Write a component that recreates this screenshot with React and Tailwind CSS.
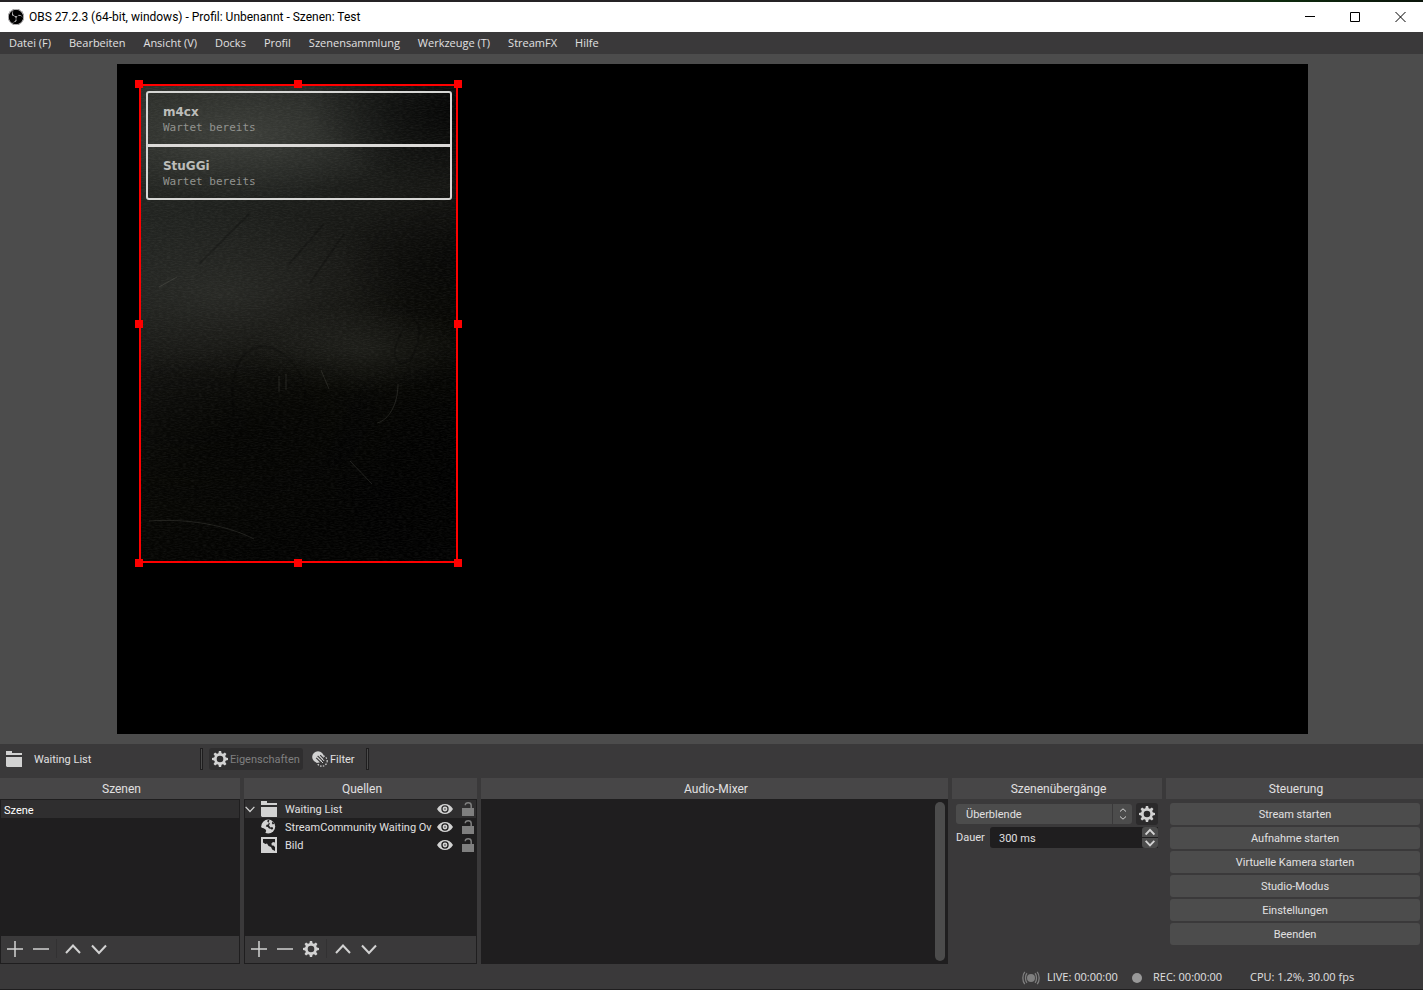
import React from "react";
import { SiObsstudio } from "react-icons/si";

const GEAR_TEETH = [0, 45, 90, 135, 180, 225, 270, 315];

function GearIcon({ className = "size-4" }) {
  return (
    <svg viewBox="0 0 16 16" className={className} fill="#d2d2d2" aria-hidden="true">
      {GEAR_TEETH.map((a) => (
        <path key={a} d="M6.3 3 L6.9 0 H9.1 L9.7 3 Z" transform={`rotate(${a} 8 8)`} />
      ))}
      <path fillRule="evenodd" d="M8 2a6 6 0 1 0 0 12a6 6 0 1 0 0-12ZM8 4.7a3.3 3.3 0 1 1 0 6.6a3.3 3.3 0 1 1 0-6.6Z" />
    </svg>
  );
}

function FolderIcon() {
  return (
    <svg viewBox="0 0 16 16" className="size-4 shrink-0" fill="#d2d2d2" aria-hidden="true">
      <path d="M0 0H6V2H16V4H0ZM0 6H16V16H1L0 15Z" />
    </svg>
  );
}

function GlobeIcon() {
  return (
    <svg viewBox="0 0 16 16" className="size-4 shrink-0" aria-hidden="true">
      <circle cx="7.200" cy="7.600" r="7" fill="#d2d2d2" />
      <path fill="#1f1e1f" d="M7 .4 8.400 1.600 7.600 3.200 8.800 4.600 8 6.600 9.400 8.400 11.400 8 12.200 9.600 11 10.800 9.600 9.800 8 9.400 6.800 8 4.800 7.400 5.600 5.800 7.200 5.400 7.800 3.800 6.200 2.600Z" />
      <path fill="#1f1e1f" d="M0 8.600 2.600 9.200 4.600 10.400 5.200 12 4.400 13.600 5.200 15H0ZM11.800 2.600 13.200 4.800 11.800 5.400 10.800 4Z" />
    </svg>
  );
}

function ImageIcon() {
  return (
    <svg viewBox="0 0 16 16" className="size-4 shrink-0" aria-hidden="true">
      <path fill="#d2d2d2" d="M0 0H16V16H0Z" />
      <path fill="#1f1e1f" d="M2 2H14V5.400L12 5 10.400 6.400 10.800 8.400 12.400 8.600 14 10V14L11.200 12.400 10 10 7.600 9 6 6.600 4.400 7 2 5.400Z" />
    </svg>
  );
}

function EyeIcon() {
  return (
    <svg viewBox="0 0 16 12" className="h-3 w-4" fill="#d2d2d2" aria-hidden="true">
      <path
        fillRule="evenodd"
        d="M0 6C2 2.600 4.800 1 8 1S14 2.600 16 6C14 9.400 11.200 11 8 11S2 9.400 0 6ZM8 2.300a3.700 3.700 0 1 0 0 7.400a3.700 3.700 0 1 0 0-7.400Z"
      />
      <path fillRule="evenodd" d="M8 3.600a2.400 2.400 0 1 0 0 4.800a2.400 2.400 0 1 0 0-4.800ZM8 5.200a.8.8 0 1 1 0 1.600a.8.8 0 1 1 0-1.600Z" />
    </svg>
  );
}

function LockIcon() {
  return (
    <svg viewBox="0 0 12 14" className="h-3.5 w-3" aria-hidden="true">
      <path fill="#7f7f7f" d="M0 6H12V14H0Z" />
      <path fill="none" stroke="#7f7f7f" strokeWidth="1.500" d="M9.200 6V3.500C9.200 1.600 8.200.8 6.200.8S3.300 1.600 3.300 3.200" />
    </svg>
  );
}

function FilterIcon() {
  return (
    <svg viewBox="0 0 16 16" className="size-4" aria-hidden="true">
      <circle cx="10" cy="10" r="5.200" fill="none" stroke="#d2d2d2" strokeWidth="1.200" strokeDasharray="1.500 1.300" />
      <circle cx="6" cy="6" r="5.800" fill="#d2d2d2" />
      <path stroke="#3a393a" strokeWidth="1.200" fill="none" d="M4.200 6.800 9.400 12M5.600 4.800 11.200 10.400M8.200 4.200 12 8" />
      <path stroke="#d2d2d2" strokeWidth="1" fill="none" d="M8.600 9.600 11 12M9.800 7.600 12.200 10" />
    </svg>
  );
}

function LineIcon({ d, width = 2, className = "size-4" }) {
  return (
    <svg viewBox="0 0 16 16" className={className} fill="none" stroke="#d2d2d2" strokeWidth={width} aria-hidden="true">
      <path d={d} />
    </svg>
  );
}

const PLUS = "M8 0V16M0 8H16";
const MINUS = "M0 8H16";
const UP = "M1 12 8 4.500 15 12";
const DOWN = "M1 4.500 8 12 15 4.500";

function Chalkboard() {
  return (
    <svg className="absolute inset-0 size-full" viewBox="0 0 319 479" preserveAspectRatio="none" aria-hidden="true">
      <defs>
        <linearGradient id="board" x1="0" y1="0" x2="0.350" y2="1">
          <stop offset="0" stopColor="#2b2d29" />
          <stop offset="0.300" stopColor="#1f211e" />
          <stop offset="0.550" stopColor="#131310" />
          <stop offset="0.750" stopColor="#080804" />
          <stop offset="1" stopColor="#020201" />
        </linearGradient>
        <radialGradient id="glow">
          <stop offset="0" stopColor="#565852" stopOpacity="0.600" />
          <stop offset="1" stopColor="#565852" stopOpacity="0" />
        </radialGradient>
        <radialGradient id="shade">
          <stop offset="0" stopColor="#000" stopOpacity="0.900" />
          <stop offset="1" stopColor="#000" stopOpacity="0" />
        </radialGradient>
        <filter id="grain" x="0" y="0" width="1" height="1">
          <feTurbulence type="fractalNoise" baseFrequency="0.250 0.900" numOctaves="2" seed="4" />
          <feColorMatrix values="0 0 0 0 0.700  0 0 0 0 0.720  0 0 0 0 0.660  0.500 0 0 0 -0.180" />
        </filter>
      </defs>
      <rect width="319" height="479" fill="url(#board)" />
      <ellipse cx="100" cy="52" rx="170" ry="65" fill="url(#glow)" opacity="0.850" />
      <ellipse cx="85" cy="210" rx="190" ry="85" fill="url(#glow)" opacity="0.450" />
      <ellipse cx="225" cy="265" rx="110" ry="45" fill="url(#glow)" opacity="0.400" />
      <ellipse cx="330" cy="25" rx="160" ry="85" fill="url(#shade)" />
      <ellipse cx="319" cy="180" rx="120" ry="80" fill="url(#shade)" opacity="0.600" />
      <ellipse cx="319" cy="400" rx="150" ry="140" fill="url(#shade)" />
      <ellipse cx="90" cy="350" rx="200" ry="85" fill="url(#shade)" opacity="0.550" />
      <rect width="319" height="479" filter="url(#grain)" opacity="0.250" />
      <g fill="none" stroke="#000" strokeOpacity="0.200" strokeWidth="2">
        <path d="M95 330C85 270 120 245 150 275S160 340 155 350M262 250C250 270 258 284 268 278S285 240 275 235M150 180 185 140M60 180 110 130M170 200 205 150" />
      </g>
      <g fill="none" stroke="#8a8c80" strokeOpacity="0.250" strokeWidth="0.800">
        <path d="M259 300C259 320 250 336 238 339M211 377 233 400M140 292V308M147 290V306M182 286 190 305M10 437C50 434 90 442 115 455M20 203 38 193" />
      </g>
    </svg>
  );
}

const HANDLES = [
  "left-0 top-0",
  "left-1/2 top-0",
  "left-full top-0",
  "left-0 top-1/2",
  "left-full top-1/2",
  "left-0 top-full",
  "left-1/2 top-full",
  "left-full top-full",
];

const WAITING = ["m4cx", "StuGGi"];

function Preview() {
  return (
    <main className="flex min-h-0 flex-1 justify-center bg-[#4c4c4c] py-2.5 pl-0.5">
      <div className="relative aspect-video h-full bg-black">
        <div className="absolute left-[22px] top-5 h-[479px] w-[319px]">
          <Chalkboard />
          <ul className="relative ml-[7px] mr-1.5 mt-[7px] flex flex-col divide-y-[3px] divide-[#dcdad8] overflow-hidden rounded-[3px] border-2 border-[#d6d6d4]">
            {WAITING.map((name) => (
              <li key={name} className="flex h-[54px] flex-col pl-[15px] pt-[11px] last:h-[51px]">
                <span className="font-['DejaVu_Sans',sans-serif] text-[12px] font-bold leading-4 text-[#bcbdba]">{name}</span>
                <span className="font-['DejaVu_Sans_Mono',monospace] text-[11px] leading-4 text-[#92938f]">Wartet bereits</span>
              </li>
            ))}
          </ul>
          <div className="absolute inset-0 border-2 border-[#ff0000]" />
          {HANDLES.map((pos) => (
            <span key={pos} className={`absolute size-2 -translate-1/2 bg-[#ff0000] ${pos}`} />
          ))}
        </div>
      </div>
    </main>
  );
}

function Dock({ title, children }) {
  return (
    <section className="flex min-w-0 flex-col">
      <h2 className="h-[21px] bg-[#474647] pl-[3px] text-center text-[12px] leading-[22px]">{title}</h2>
      {children}
    </section>
  );
}

function ToolButton({ label, children }) {
  return (
    <button type="button" aria-label={label} className="flex h-full w-[26px] items-center justify-center">
      {children}
    </button>
  );
}

function ListToolbar({ withGear }) {
  return (
    <div className="flex h-[27px] items-center bg-[#3a393a] pb-0.5 pl-px">
      <ToolButton label="Hinzufügen"><LineIcon d={PLUS} width={1.5} /></ToolButton>
      <ToolButton label="Entfernen"><LineIcon d={MINUS} width={1.5} /></ToolButton>
      {withGear && <ToolButton label="Eigenschaften"><GearIcon /></ToolButton>}
      <span className="mx-0.5 h-[19px] w-0.5 border-l border-[#323132]" />
      <ToolButton label="Nach oben"><LineIcon d={UP} /></ToolButton>
      <ToolButton label="Nach unten"><LineIcon d={DOWN} /></ToolButton>
    </div>
  );
}

const SOURCES = [
  { name: "Waiting List", Icon: FolderIcon, group: true },
  { name: "StreamCommunity Waiting Ov", Icon: GlobeIcon },
  { name: "Bild", Icon: ImageIcon },
];

const CONTROLS = [
  "Stream starten",
  "Aufnahme starten",
  "Virtuelle Kamera starten",
  "Studio-Modus",
  "Einstellungen",
  "Beenden",
];

const MENU = ["Datei (F)", "Bearbeiten", "Ansicht (V)", "Docks", "Profil", "Szenensammlung", "Werkzeuge (T)", "StreamFX", "Hilfe"];

function BarSeparator() {
  return <span className="h-[22px] w-[3px] border border-[#1f1e1f] bg-[#4c4c4c]" />;
}

export default function App() {
  return (
    <div className="flex h-screen min-h-[700px] flex-col overflow-hidden bg-[#3a393a] font-[Roboto,'Noto_Sans',sans-serif] text-[11px] text-[#e1e0e1]">
      <div className="h-0.5 shrink-0 bg-linear-to-r from-[#252325] from-80% via-[#0d2a0d] via-90% to-[#0a140a]" />
      <header className="flex h-[30px] shrink-0 items-center bg-white pl-2 text-black">
        <span className="rounded-full bg-black">
          <SiObsstudio className="size-4 text-[#dcdadc]" aria-hidden="true" />
        </span>
        <h1 className="ml-[5px] flex-1 text-[12px]">OBS 27.2.3 (64-bit, windows) - Profil: Unbenannt - Szenen: Test</h1>
        <button type="button" aria-label="Minimieren" className="flex h-full w-[45px] items-center justify-center">
          <svg viewBox="0 0 11 10" className="h-2.5 w-[11px]" stroke="#000" aria-hidden="true"><path d="M0 4.500H10" /></svg>
        </button>
        <button type="button" aria-label="Maximieren" className="flex h-full w-[45px] items-center justify-center">
          <svg viewBox="0 0 11 10" className="h-2.5 w-[11px]" stroke="#000" fill="none" aria-hidden="true"><path d="M.5.5H9.500V9.500H.5Z" /></svg>
        </button>
        <button type="button" aria-label="Schließen" className="flex h-full w-[45px] items-center justify-center">
          <svg viewBox="0 0 11 10" className="h-2.5 w-[11px]" stroke="#000" aria-hidden="true"><path d="M.5 0 10.500 10M10.500 0 .5 10" /></svg>
        </button>
      </header>
      <nav className="flex h-[22px] shrink-0 items-center gap-0.5 pl-px font-['Open_Sans','Noto_Sans',sans-serif]">
        {MENU.map((m) => (
          <button key={m} type="button" className="px-2">{m}</button>
        ))}
      </nav>

      <Preview />

      <div className="flex h-[34px] shrink-0 items-start pl-1.5 pt-1">
        <div className="flex h-[22px] w-[194px] items-center gap-3">
          <FolderIcon />
          <span className="pt-0.5">Waiting List</span>
        </div>
        <BarSeparator />
        <button type="button" disabled className="ml-1.5 flex h-[22px] w-[94px] items-center gap-0.5 rounded-[3px] bg-[#2f2e2f] pl-[3px] text-[#7f7f7f]">
          <GearIcon className="size-4 shrink-0" />
          <span className="pt-0.5">Eigenschaften</span>
        </button>
        <button type="button" className="ml-[9px] mr-[11px] flex h-[22px] w-[43px] items-center gap-0.5">
          <FilterIcon />
          <span className="pt-0.5">Filter</span>
        </button>
        <BarSeparator />
      </div>

      <div className="grid h-[186px] shrink-0 grid-cols-[240fr_233fr_467fr_210fr_257fr] gap-1">
        <Dock title="Szenen">
          <div className="flex flex-1 flex-col border border-[#1f1e1f] bg-[#1f1e1f]">
            <ul className="flex-1">
              <li className="h-[18px] bg-[#2f2e2f] pl-[3px] leading-[21px] text-white">Szene</li>
            </ul>
            <ListToolbar />
          </div>
        </Dock>

        <Dock title="Quellen">
          <div className="flex flex-1 flex-col border border-[#1f1e1f] bg-[#1f1e1f]">
            <ul className="flex-1">
              {SOURCES.map(({ name, Icon, group }) => (
                <li key={name} className={`flex h-[18px] items-center pr-0.5 ${group ? "bg-[#2f2e2f]" : ""}`}>
                  <span className="flex w-4 shrink-0">{group && <LineIcon d={DOWN} className="size-2.5" />}</span>
                  <Icon />
                  <span className="ml-2 min-w-0 flex-1 whitespace-nowrap pt-0.5">{name}</span>
                  <button type="button" aria-label={`${name} ein-/ausblenden`} className="ml-1.5"><EyeIcon /></button>
                  <button type="button" aria-label={`${name} sperren`} className="ml-[9px]"><LockIcon /></button>
                </li>
              ))}
            </ul>
            <ListToolbar withGear />
          </div>
        </Dock>

        <Dock title="Audio-Mixer">
          <div className="flex flex-1 justify-end bg-[#1f1e1f] p-[3px]">
            <div className="w-2.5 rounded-full bg-[#4c4c4c]" />
          </div>
        </Dock>

        <Dock title="Szenenübergänge">
          <div className="flex flex-col gap-0.5 p-1">
            <div className="flex items-center gap-1">
              <div className="grid h-5 flex-1 grid-cols-[1fr_20px] rounded-[3px] bg-[#4c4c4c]">
                <select aria-label="Szenenübergang" className="col-span-2 col-start-1 row-start-1 appearance-none bg-transparent pl-2.5 pt-0.5">
                  <option>Überblende</option>
                </select>
                <span className="pointer-events-none col-start-2 row-start-1 flex items-center justify-center border-l border-[#3a393a]">
                  <svg viewBox="0 0 8 12" className="h-3 w-2" fill="none" stroke="#d2d2d2" aria-hidden="true">
                    <path d="M1 3.500 4 .8 7 3.500M1 8.500 4 11.200 7 8.500" />
                  </svg>
                </span>
              </div>
              <button type="button" aria-label="Übergangseigenschaften" className="flex size-[22px] items-center justify-center rounded-[3px] bg-[#2b2a2b]">
                <GearIcon />
              </button>
            </div>
            <div className="flex h-[21px] items-center">
              <label htmlFor="duration" className="w-[34px] pt-0.5">Dauer</label>
              <input id="duration" defaultValue="300 ms" className="h-full min-w-0 flex-1 rounded-l-[3px] bg-[#1f1e1f] pl-[9px] pt-0.5 outline-none" />
              <div className="flex h-full w-4 flex-col gap-px bg-[#1f1e1f]">
                <button type="button" aria-label="Dauer erhöhen" className="flex flex-1 items-center justify-center rounded-t-[3px] bg-[#4c4c4c]">
                  <LineIcon d={UP} width={3} className="size-2.5" />
                </button>
                <button type="button" aria-label="Dauer verringern" className="flex flex-1 items-center justify-center rounded-b-[3px] bg-[#4c4c4c]">
                  <LineIcon d={DOWN} width={3} className="size-2.5" />
                </button>
              </div>
            </div>
          </div>
        </Dock>

        <Dock title="Steuerung">
          <div className="flex flex-col gap-0.5 py-1 pl-1 pr-[3px]">
            {CONTROLS.map((c) => (
              <button key={c} type="button" className="h-[22px] rounded-[3px] bg-[#4c4c4c] pt-0.5">{c}</button>
            ))}
          </div>
        </Dock>
      </div>

      <footer className="flex h-[25px] shrink-0 items-center justify-end pr-[67px] pt-0.5 font-['Open_Sans','Noto_Sans',sans-serif]">
        <svg viewBox="0 0 18 14" className="mr-[7px] h-3.5 w-[18px]" fill="none" stroke="#7f7f7f" strokeWidth="1.300" aria-hidden="true">
          <circle cx="9" cy="7" r="4" fill="#7f7f7f" stroke="none" />
          <path d="M5 2.200C3 4.500 3 9.500 5 11.800M13 2.200C15 4.500 15 9.500 13 11.800M2.800.8C.2 4 .2 10 2.800 13.200M15.200.8C17.800 4 17.800 10 15.200 13.200" />
        </svg>
        <span className="w-[73px]">LIVE: 00:00:00</span>
        <span className="ml-3 mr-[11px] size-2.5 rounded-full bg-[#999999]" />
        <span className="w-[71px]">REC: 00:00:00</span>
        <span className="ml-[26px] w-[106px]">CPU: 1.2%, 30.00 fps</span>
      </footer>
      <div className="h-px shrink-0 bg-[#1f1e1f]" />
    </div>
  );
}
